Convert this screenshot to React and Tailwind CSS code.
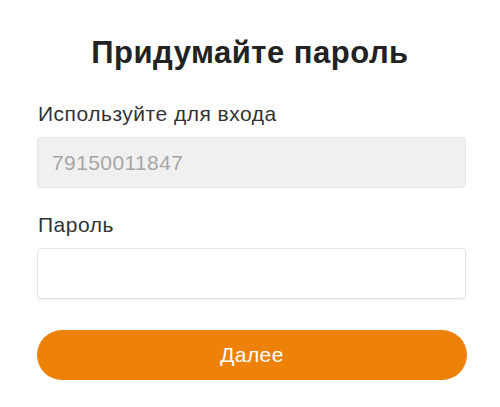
export default function App() {
  return (
    <div className="w-[500px] h-[407px] bg-white font-['Liberation_Sans',Arial,sans-serif] px-[37px] pt-[35px]">
      <h1 className="text-center text-[31px] font-bold text-[#222] leading-[36px] tracking-[0.5px]">Придумайте пароль</h1>
      <div className="mt-[31px] text-[21px] leading-[24px] text-[#333] tracking-[0.5px] pl-[1px]">Используйте для входа</div>
      <div className="mt-[11px] h-[51px] w-[429px] rounded-[4px] border border-[#e6e6e6] bg-[#f0f0f0] flex items-center px-[14px] text-[21px] text-[#a6a6a6] tracking-[0.4px]">79150011847</div>
      <div className="mt-[25px] text-[21px] leading-[24px] text-[#333] tracking-[0.5px] pl-[1px]">Пароль</div>
      <div className="mt-[11px] h-[51px] w-[429px] rounded-[4px] border border-[#e3e3e3] bg-white shadow-[0_1px_2px_rgba(0,0,0,0.06)]"></div>
      <button className="mt-[31px] h-[50px] w-[430px] rounded-full bg-[#ee8208] text-white text-[21px] tracking-[0.4px] flex items-center justify-center">Далее</button>
    </div>
  );
}
